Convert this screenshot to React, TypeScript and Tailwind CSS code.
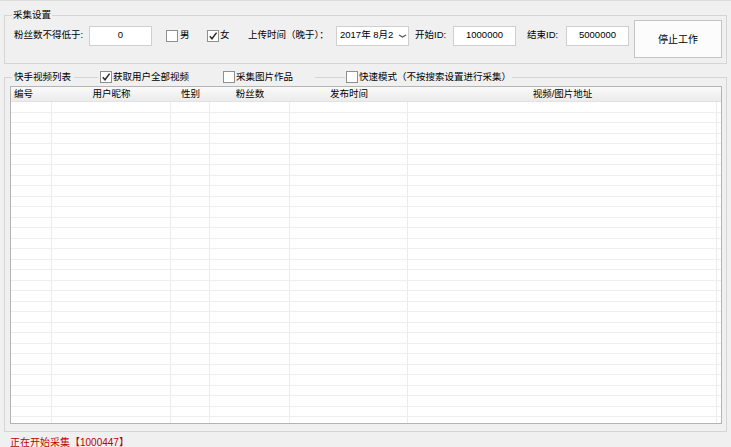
import React from "react";

function Check({ checked }: { checked?: boolean }) {
  return (
    <span className="flex h-[12px] w-[12px] shrink-0 items-center justify-center border border-[#8f8f8f] bg-white">
      {checked && (
        <svg width="10" height="10" viewBox="0 0 10 10">
          <path d="M1.8 5.2 L4 7.8 L8.6 1.6" fill="none" stroke="#2b2b2b" strokeWidth="1.5" />
        </svg>
      )}
    </span>
  );
}

const cols = [
  { w: "w-[41px]", label: "编号", left: true },
  { w: "w-[119px]", label: "用户昵称" },
  { w: "w-[39px]", label: "性别" },
  { w: "w-[80px]", label: "粉丝数" },
  { w: "w-[118px]", label: "发布时间" },
  { w: "w-[309px]", label: "视频/图片地址" },
];

export default function App() {
  const rows = Array.from({ length: 32 });
  return (
    <div className="relative h-[447px] w-[731px] overflow-hidden bg-[#f0f0f0] text-[9.5px] text-black font-['Liberation_Sans','Noto_Sans_CJK_SC',sans-serif]">
      <div className="h-px w-full bg-[#dcdcdc]" />

      {/* Group 1 */}
      <div className="relative ml-[4px] mt-[14px] h-[49px] w-[723px] border border-[#d5d5d5]">
        <span className="absolute left-[7px] top-[-8px] bg-[#f0f0f0] px-[1px] leading-[14px]">采集设置</span>
        <div className="flex h-[39px] items-center whitespace-nowrap">
          <span className="ml-[9px] w-[72px]">粉丝数不得低于:</span>
          <div className="ml-[3px] flex h-[20px] w-[63px] items-center justify-center border border-[#cfcfcf] bg-white">0</div>
          <span className="ml-[14px]"><Check /></span>
          <span className="ml-[2px] w-[12px]">男</span>
          <span className="ml-[15px]"><Check checked /></span>
          <span className="ml-[1px] w-[12px]">女</span>
          <span className="ml-[16px] w-[86px]">上传时间（晚于）：</span>
          <div className="ml-[2px] flex h-[20px] w-[73px] items-center border border-[#cfcfcf] bg-white">
            <span className="ml-[3px] w-[53px]">2017年 8月2</span>
            <svg width="9" height="6" viewBox="0 0 9 6" className="ml-[5px]">
              <path d="M1 2 L4.5 4 L8 2" fill="none" stroke="#555" strokeWidth="1.2" />
            </svg>
          </div>
          <span className="ml-[6px] w-[36px]">开始ID:</span>
          <div className="ml-[2px] flex h-[20px] w-[63px] items-center justify-center border border-[#cfcfcf] bg-white">1000000</div>
          <span className="ml-[11px] w-[37px]">结束ID:</span>
          <div className="ml-[2px] flex h-[20px] w-[63px] items-center justify-center border border-[#cfcfcf] bg-white">5000000</div>
          <div className="ml-[5px] mt-[7px] flex h-[38px] w-[88px] items-center justify-center border border-[#c4c4c4] bg-[#fcfcfc] text-[10px]">
            停止工作
          </div>
        </div>
      </div>

      {/* Group 2 */}
      <div className="relative ml-[4px] mt-[13px] h-[355px] w-[723px] border border-[#d5d5d5]">
        <div className="absolute left-0 top-[-8px] flex h-[14px] items-center whitespace-nowrap leading-[14px]">
          <span className="ml-[7px] w-[62px] bg-[#f0f0f0] pl-[2px]">快手视频列表</span>
          <div className="ml-[24px] flex h-[14px] w-[125px] items-center bg-[#f0f0f0] pl-[2px]">
            <Check checked />
            <span className="ml-[1px]">获取用户全部视频</span>
          </div>
          <div className="flex h-[14px] w-[92px] items-center bg-[#f0f0f0]">
            <Check />
            <span className="ml-[1px]">采集图片作品</span>
          </div>
          <div className="ml-[30px] flex h-[14px] w-[167px] items-center bg-[#f0f0f0] pl-[1px]">
            <Check />
            <span className="ml-[1px]">快速模式（不按搜索设置进行采集）</span>
          </div>
        </div>

        <div className="ml-[5px] mt-[8px] h-[338px] w-[712px] overflow-hidden border border-[#b4b4b4] bg-white">
          <div className="flex h-[15px] items-center border-b border-[#e2e2e2] bg-gradient-to-b from-[#fafafa] to-[#ebebeb] leading-[14px]">
            {cols.map((c) => (
              <div key={c.label} className={`${c.w} shrink-0 ${c.left ? "pl-[3px]" : "text-center"}`}>
                {c.label}
              </div>
            ))}
          </div>
          {rows.map((_, i) => (
            <div key={i} className="flex h-[10.5px] border-b border-[#eeeeee]">
              {cols.map((c) => (
                <div key={c.label} className={`${c.w} shrink-0 border-r border-[#ececec]`} />
              ))}
            </div>
          ))}
        </div>
      </div>

      <div className="pl-[10px] pt-[5px] text-[10px] leading-[12px] text-[#c00000]">正在开始采集【1000447】</div>
    </div>
  );
}
